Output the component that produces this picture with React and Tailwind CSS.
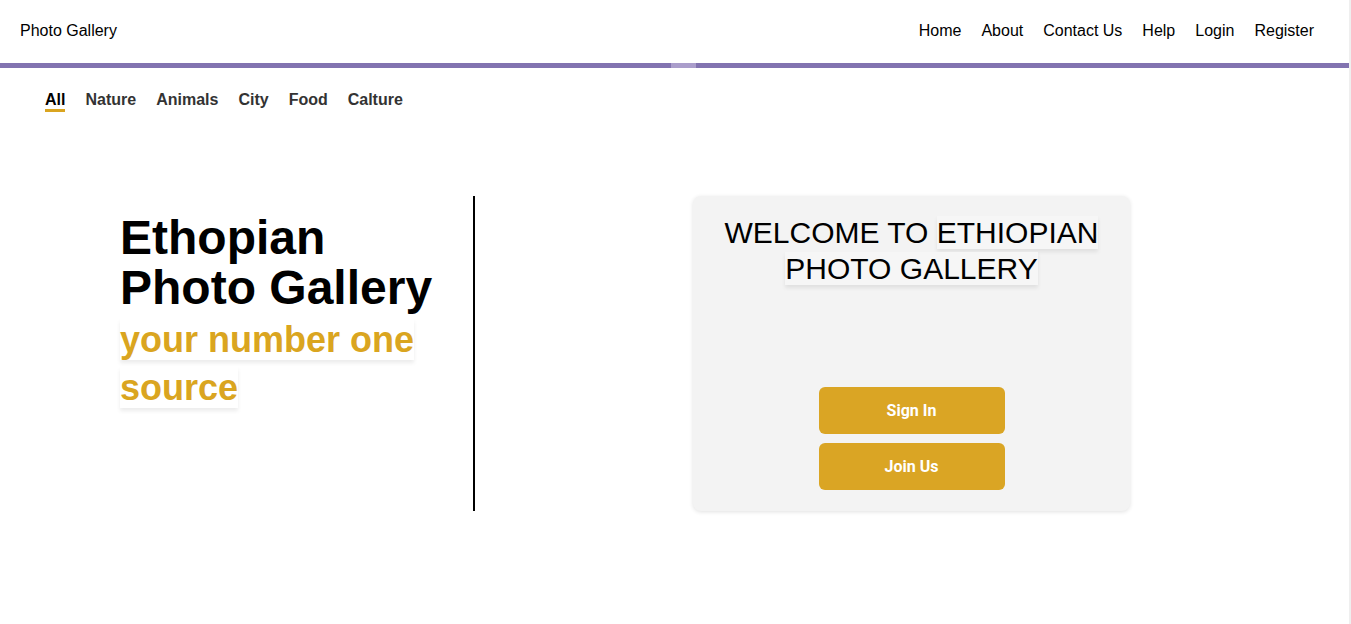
import React from "react";

const links = ["Home", "About", "Contact Us", "Help", "Login", "Register"];
const tabs = ["All", "Nature", "Animals", "City", "Food", "Calture"];

export default function App() {
  return (
    <div className="flex min-h-[624px] w-full bg-white font-['Liberation_Sans',Arial,sans-serif]">
      <div className="flex-1 min-w-0">
        {/* top nav */}
        <nav className="flex h-[63px] items-center justify-between pb-[2px] pl-[20px] pr-[35px] text-[16px] text-black">
          <span>Photo Gallery</span>
          <div className="flex items-center gap-[20px]">
            {links.map((l) => (
              <a key={l} className="cursor-pointer">
                {l}
              </a>
            ))}
          </div>
        </nav>

        {/* progress bar */}
        <div className="flex h-[5px] w-full">
          <div className="w-[671px] bg-[#8273b0]" />
          <div className="w-[25px] bg-[#aa9dcb]" />
          <div className="flex-1 bg-[#8273b0]" />
        </div>

        {/* category tabs */}
        <div className="flex gap-[20px] pl-[45px] pt-[23px] text-[16px] font-bold text-[#333]">
          {tabs.map((t, i) => (
            <span
              key={t}
              className={
                i === 0
                  ? "border-b-[3px] border-[#daa520] leading-[18px] text-black"
                  : "pb-[3px] leading-[18px]"
              }
            >
              {t}
            </span>
          ))}
        </div>

        {/* hero */}
        <section className="mt-[84px] flex h-[315px]">
          <div className="w-[475px] border-r-2 border-black pl-[120px] pt-[17px]">
            <h1 className="text-[48px] font-bold leading-[50px] text-black">
              Ethopian
              <br />
              Photo Gallery
            </h1>
            <p className="mt-[3px] text-[36px] font-bold leading-[48px] text-[#daa520]">
              <span className="box-decoration-clone bg-white shadow-[0_3px_4px_rgba(0,0,0,0.08)]">
                your number one source
              </span>
            </p>
          </div>

          <div className="ml-[218px] flex w-[437px] flex-col items-center rounded-lg bg-[#f3f3f3] px-[20px] pt-[19px] pb-[21px] shadow-[0_1px_4px_rgba(0,0,0,0.12)]">
            <h2 className="text-center text-[30px] font-normal leading-[36px] text-black">
              WELCOME TO{" "}
              <span className="box-decoration-clone bg-[#f6f6f6] shadow-[0_3px_4px_rgba(0,0,0,0.08)]">
                ETHIOPIAN PHOTO GALLERY
              </span>
            </h2>
            <div className="mt-auto flex flex-col gap-[9px] font-['Roboto',sans-serif]">
              <button className="h-[47px] w-[186px] rounded-md bg-[#daa524] text-[16px] font-bold text-white">
                Sign In
              </button>
              <button className="h-[47px] w-[186px] rounded-md bg-[#daa524] text-[16px] font-bold text-white">
                Join Us
              </button>
            </div>
          </div>
        </section>
      </div>
      <div className="w-[2px] bg-[#efefef]" />
    </div>
  );
}
